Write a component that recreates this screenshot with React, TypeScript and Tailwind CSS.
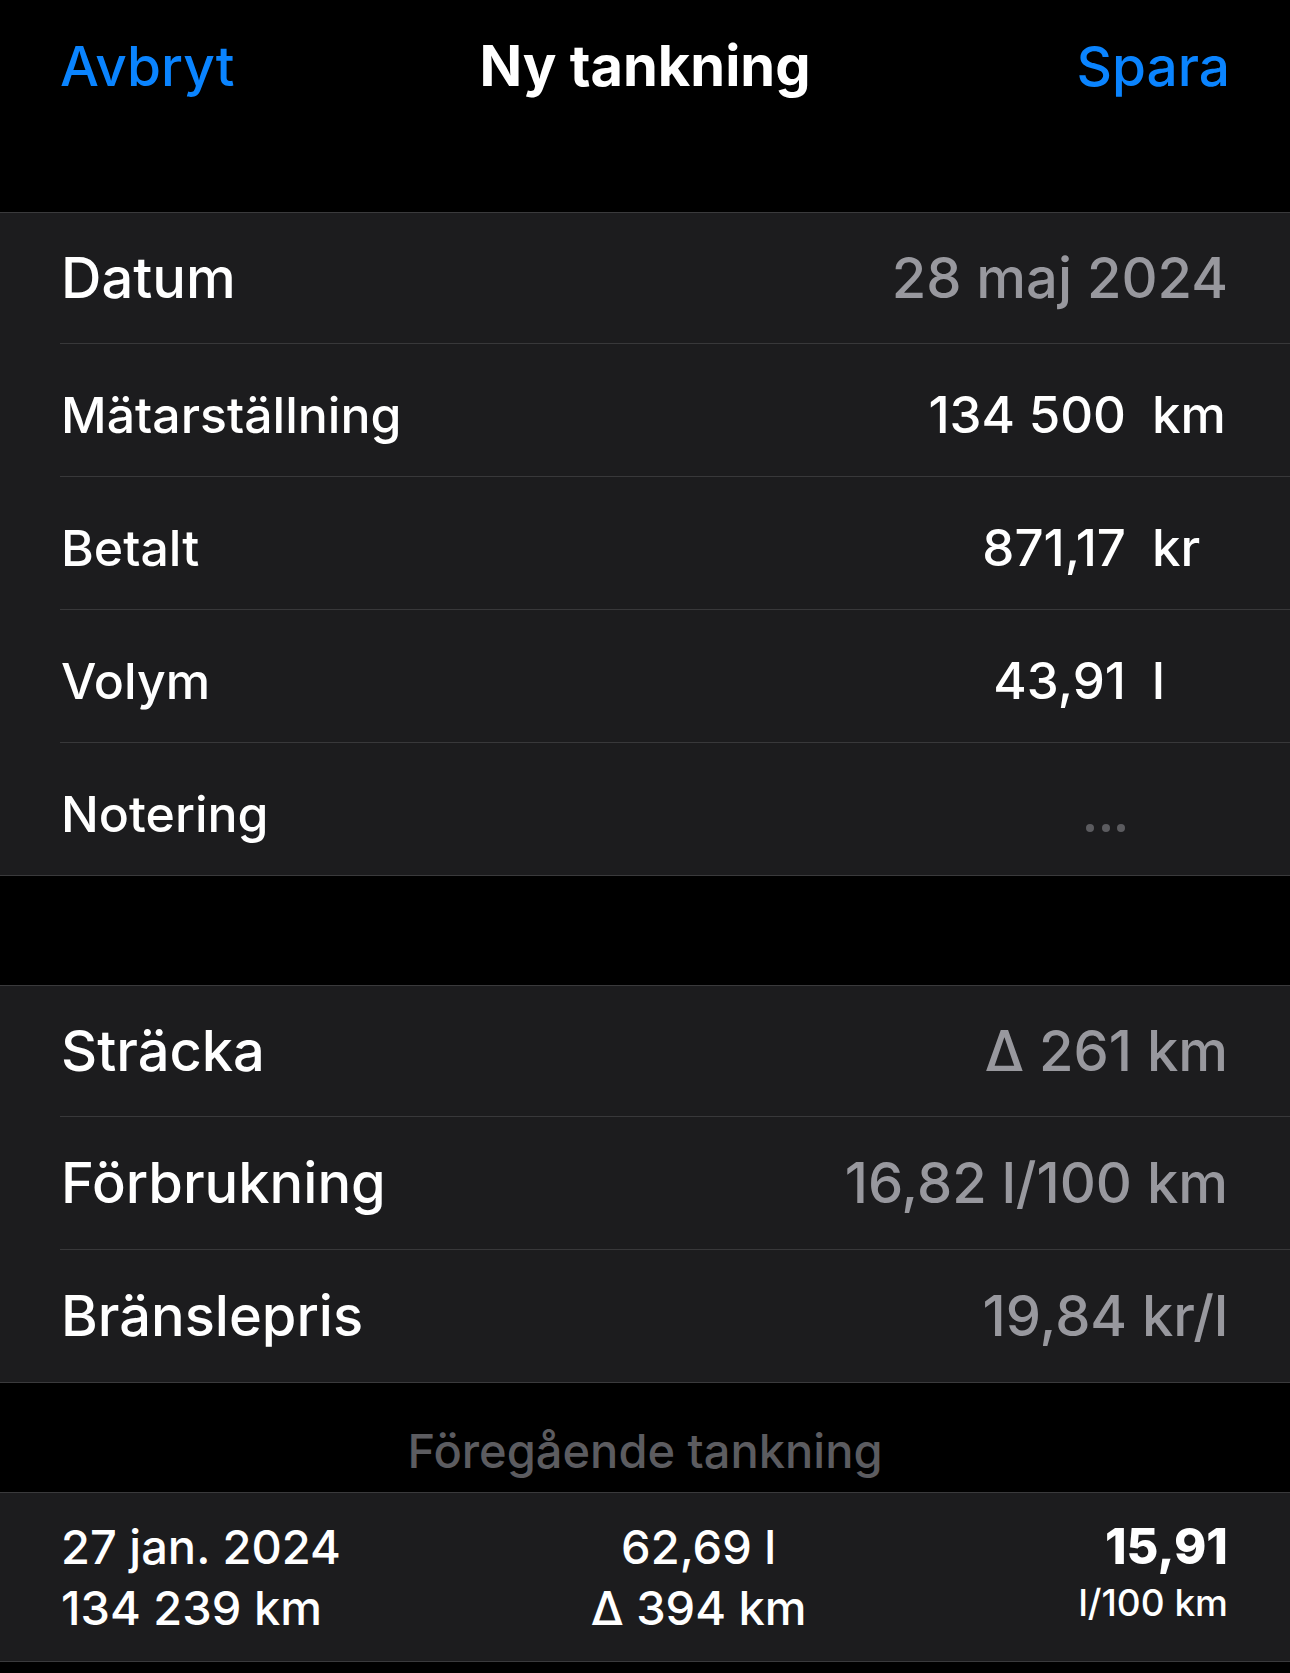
import React from "react";

const font = { fontFamily: "Inter, 'Noto Sans', sans-serif" };

function Row({
  label,
  children,
  h,
  last,
  big,
}: {
  label: string;
  children: React.ReactNode;
  h: string;
  last?: boolean;
  big?: boolean;
}) {
  return (
    <div className={`pl-[60px] ${h}`}>
      <div
        className={`h-full flex items-center justify-between pr-[62px] ${big ? "" : "pt-[10px]"} ${
          last ? "" : "border-b border-[#38383a]"
        }`}
      >
        <span className={`pl-[1px] text-white font-medium ${big ? "text-[56px]" : "text-[50px]"}`}>{label}</span>
        {children}
      </div>
    </div>
  );
}

function Unit({ num, unit }: { num: React.ReactNode; unit: string }) {
  return (
    <div className="flex items-baseline text-[51px] text-white font-medium">
      <span className="text-right">{num}</span>
      <span className="ml-[26px] w-[76px] text-left">{unit}</span>
    </div>
  );
}

export default function App() {
  return (
    <div className="w-[1290px] h-[1673px] bg-black overflow-hidden" style={font}>
      {/* Nav */}
      <div className="h-[212px] grid grid-cols-[1fr_auto_1fr] items-start px-[60px] pt-[33px]">
        <span className="justify-self-start text-[55px] leading-[66px] text-[#0a84ff] font-medium">Avbryt</span>
        <span className="text-[56px] leading-[66px] text-white font-bold">Ny tankning</span>
        <span className="justify-self-end text-[55px] leading-[66px] text-[#0a84ff] font-medium">Spara</span>
      </div>

      {/* Section 1 */}
      <div className="bg-[#1c1c1e] border-y border-[#3a3a3c]">
        <Row label="Datum" h="h-[131px]" big>
          <span className="text-[56px] font-medium text-[#98989e]">28 maj 2024</span>
        </Row>
        <Row label="Mätarställning" h="h-[133px]">
          <Unit num="134 500" unit="km" />
        </Row>
        <Row label="Betalt" h="h-[133px]">
          <Unit num="871,17" unit="kr" />
        </Row>
        <Row label="Volym" h="h-[133px]">
          <Unit num="43,91" unit="l" />
        </Row>
        <Row label="Notering" h="h-[132px]" last>
          <div className="flex items-center mt-[28px] mr-[103px] gap-[7.5px]">
            <span className="w-[8px] h-[8px] rounded-full bg-[#5b5b5f]" />
            <span className="w-[8px] h-[8px] rounded-full bg-[#5b5b5f]" />
            <span className="w-[8px] h-[8px] rounded-full bg-[#5b5b5f]" />
          </div>
        </Row>
      </div>

      <div className="h-[109px]" />

      {/* Section 2 */}
      <div className="bg-[#1c1c1e] border-y border-[#3a3a3c]">
        <Row label="Sträcka" h="h-[131px]" big>
          <span className="text-[56px] font-medium text-[#98989e]">Δ 261 km</span>
        </Row>
        <Row label="Förbrukning" h="h-[133px]" big>
          <span className="text-[56px] font-medium text-[#98989e]">16,82 l/100 km</span>
        </Row>
        <Row label="Bränslepris" h="h-[132px]" big last>
          <span className="text-[56px] font-medium text-[#98989e]">19,84 kr/l</span>
        </Row>
      </div>

      {/* Header */}
      <div className="h-[109px] pt-[41px] text-center">
        <span className="text-[47px] leading-[54px] font-medium text-[#5c5c60]">Föregående tankning</span>
      </div>

      {/* Section 3 */}
      <div className="bg-[#1c1c1e] border-y border-[#3a3a3c] h-[170px] flex items-start justify-between pl-[61px] pr-[62px] pt-[23px] text-white font-medium">
        <div className="flex flex-col text-[47px] leading-[61px]">
          <span>27 jan. 2024</span>
          <span>134 239 km</span>
        </div>
        <div className="flex flex-col items-center text-[47px] leading-[61px] mr-[22px]">
          <span>62,69 l</span>
          <span>Δ 394 km</span>
        </div>
        <div className="flex flex-col items-end">
          <span className="text-[49px] leading-[61px] font-extrabold">15,91</span>
          <span className="text-[37px] leading-[52px]">l/100 km</span>
        </div>
      </div>
    </div>
  );
}
